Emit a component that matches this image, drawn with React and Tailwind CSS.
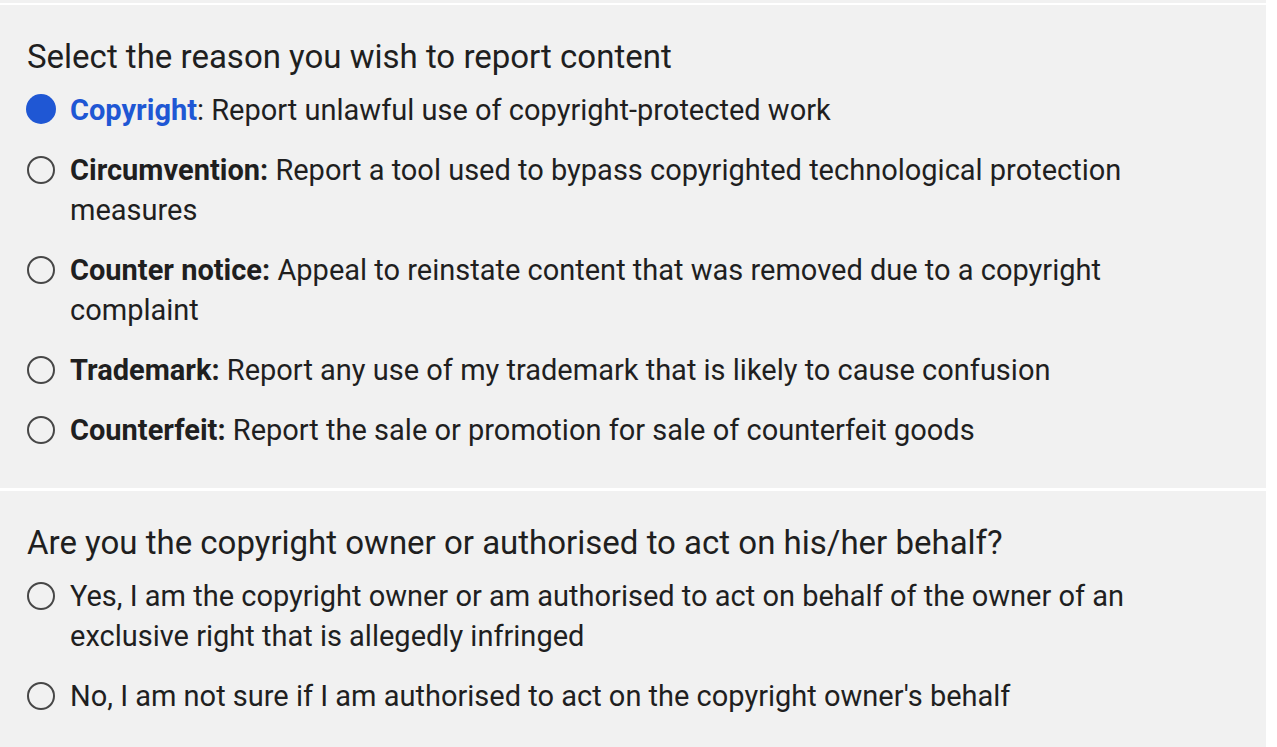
import React from "react";

const font = { fontFamily: "Roboto, 'Noto Sans', sans-serif" };

function Radio({ checked }) {
  return checked ? (
    <span className="mt-[4px] block h-[30px] w-[30px] shrink-0 rounded-full bg-[#1f57d4] -ml-[1px] -mr-[1px]" />
  ) : (
    <span className="mt-[6px] block h-[28px] w-[28px] shrink-0 rounded-full border-2 border-[#474747]" />
  );
}

function Option({ checked, label, children }) {
  return (
    <div className="flex items-start gap-[15px]">
      <Radio checked={checked} />
      <p className="text-[29px] leading-[40px] text-[#1f1f1f]">
        {label}
        {children}
      </p>
    </div>
  );
}

export default function App() {
  return (
    <div className="min-h-screen bg-white pr-[11px]" style={font}>
      <div className="h-[3px] bg-[#f1f1f1]" />
      <div className="mt-[2px] bg-[#f1f1f1] pl-[27px] pr-[64px] pt-[32px] pb-[38px]">
        <h2 className="text-[33px] font-normal leading-[40px] text-[#1f1f1f]">
          Select the reason you wish to report content
        </h2>
        <div className="mt-[13px] flex flex-col gap-[20px]">
          <Option
            checked
            label={<span className="font-bold text-[#1f57d4]">Copyright</span>}
          >
            : Report unlawful use of copyright-protected work
          </Option>
          <Option label={<span className="font-bold">Circumvention:</span>}>
            {" "}Report a tool used to bypass copyrighted technological protection measures
          </Option>
          <Option label={<span className="font-bold">Counter notice:</span>}>
            {" "}Appeal to reinstate content that was removed due to a copyright complaint
          </Option>
          <Option label={<span className="font-bold">Trademark:</span>}>
            {" "}Report any use of my trademark that is likely to cause confusion
          </Option>
          <Option label={<span className="font-bold">Counterfeit:</span>}>
            {" "}Report the sale or promotion for sale of counterfeit goods
          </Option>
        </div>
      </div>
      <div className="mt-[3px] min-h-[256px] bg-[#f1f1f1] pl-[27px] pr-[64px] pt-[32px] pb-[40px]">
        <h2 className="text-[33px] font-normal leading-[40px] text-[#1f1f1f]">
          Are you the copyright owner or authorised to act on his/her behalf?
        </h2>
        <div className="mt-[13px] flex flex-col gap-[20px]">
          <Option label="">
            Yes, I am the copyright owner or am authorised to act on behalf of the owner of an exclusive right that is allegedly infringed
          </Option>
          <Option label="">
            No, I am not sure if I am authorised to act on the copyright owner's behalf
          </Option>
        </div>
      </div>
    </div>
  );
}
